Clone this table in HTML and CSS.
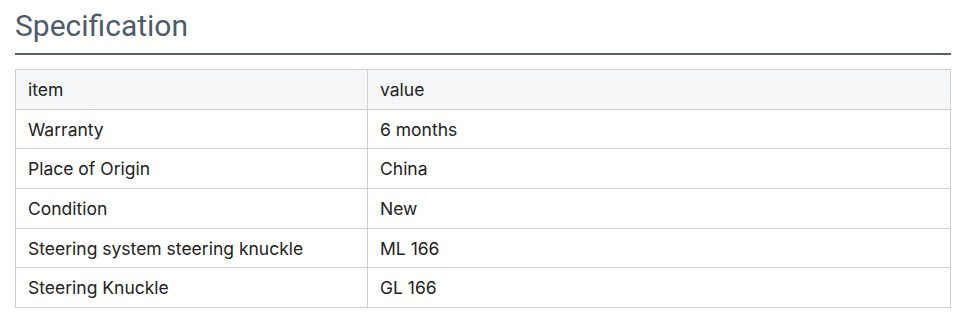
FILE: index.html
```html
<!DOCTYPE html>
<html>
<head>
<meta charset="utf-8">
<link rel="stylesheet" href="styles.css">
</head>
<body>
<div class="spec">
  <h2 class="spec-title">Specification</h2>
  <table class="spec-table">
    <tr class="head"><td class="c1">item</td><td>value</td></tr>
    <tr><td class="c1">Warranty</td><td>6 months</td></tr>
    <tr><td class="c1">Place of Origin</td><td>China</td></tr>
    <tr><td class="c1">Condition</td><td>New</td></tr>
    <tr><td class="c1">Steering system steering knuckle</td><td>ML 166</td></tr>
    <tr><td class="c1">Steering Knuckle</td><td>GL 166</td></tr>
  </table>
</div>
</body>
</html>
```
FILE: styles.css
```css
html, body { margin: 0; padding: 0; background: #fff; }
body { font-family: Inter, "Noto Sans", sans-serif; }
.spec { padding: 0 14px 0 15px; }
.spec-title {
  margin: 0;
  padding-top: 8px;
  font-size: 30px;
  line-height: 36px;
  font-weight: 400;
  color: #4f5b6b;
  border-bottom: 2px solid #56616c;
  padding-bottom: 9px;
  font-family: Roboto, sans-serif;
}
.spec-table {
  margin-top: 14px;
  width: 100%;
  border-collapse: collapse;
  font-size: 17.5px;
  color: #222;
}
.spec-table td {
  border: 1px solid #d0d0d0;
  height: 39.7px;
  padding: 0 12px;
  box-sizing: border-box;
}
.spec-table .c1 { width: 352px; }
.spec-table .head td { background: #f5f6f7; }
```
